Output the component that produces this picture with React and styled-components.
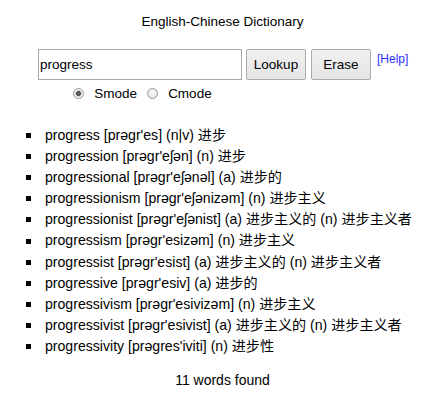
import React, { useState } from 'react';
import styled, { createGlobalStyle } from 'styled-components';

const GlobalStyle = createGlobalStyle`
    body {
        margin: 0;
        background: #fff;
        color: #000;
        font-family: "Liberation Sans", "Noto Sans CJK SC", sans-serif;
        font-size: 14px;
    }
`;

const Page = styled.div`
    box-sizing: border-box;
    width: 441px;
    padding: 14px 0 0 4px;
`;

const Title = styled.div`
    text-align: center;
    font-size: 13.5px;
    line-height: 16px;
`;

const SearchTable = styled.div`
    display: grid;
    grid-template-columns: 204px auto auto auto;
    justify-content: start;
    align-items: start;
    margin: 19px 0 0 34px;
`;

const Input = styled.input`
    box-sizing: border-box;
    width: 204px;
    height: 31px;
    border: 1px solid #a9a9a9;
    padding: 0 1px;
    font-family: inherit;
    font-size: 13.5px;
    color: #000;
    outline: none;
`;

const Button = styled.button`
    box-sizing: border-box;
    height: 31px;
    width: 60px;
    margin-left: ${p => p.$gap}px;
    border: 1px solid #acacac;
    border-radius: 2px;
    background: linear-gradient(#f0f0f0, #e5e5e5);
    font-family: inherit;
    font-size: 13.5px;
    color: #000;
    padding: 0;
`;

const Help = styled.a`
    color: #3030ff;
    font-size: 12px;
    line-height: 14px;
    text-decoration: none;
    margin-left: 6px;
    padding-top: 3px;
`;

const Modes = styled.div`
    grid-column: 1;
    display: flex;
    justify-content: center;
    align-items: center;
    gap: 10px;
    height: 26px;
    padding-left: 5px;
    font-size: 13.5px;
`;

const Mode = styled.label`
    display: flex;
    align-items: center;
    gap: 10px;
`;

const Radio = styled.input`
    appearance: none;
    box-sizing: border-box;
    width: 11px;
    height: 11px;
    margin: 0;
    border: 1px solid #9a9a9a;
    border-radius: 50%;
    background: radial-gradient(circle at 50% 40%, #fafafa, #dcdcdc);

    &:checked {
        background: radial-gradient(circle, #5a5a5a 0 2.3px, #d8d8d8 2.8px 3.4px, #f0f0f0 3.6px);
    }
`;

const List = styled.ul`
    list-style: none;
    margin: 19px 0 0;
    padding: 0 0 0 22px;
    line-height: 21.1px;
    font-size: 14.1px;
`;

const Item = styled.li`
    display: flex;
    align-items: center;
    gap: 14px;
    white-space: nowrap;
`;

const Bullet = styled.span`
    width: 5px;
    height: 5px;
    background: #000;
    flex: none;
`;

const Footer = styled.div`
    text-align: center;
    line-height: 16px;
    margin-top: 15px;
`;

const words = [
    ["progress", "prəgr'es", "(n|v) 进步"],
    ["progression", "prəgr'eʃən", "(n) 进步"],
    ["progressional", "prəgr'eʃənəl", "(a) 进步的"],
    ["progressionism", "prəgr'eʃənizəm", "(n) 进步主义"],
    ["progressionist", "prəgr'eʃənist", "(a) 进步主义的 (n) 进步主义者"],
    ["progressism", "prəgr'esizəm", "(n) 进步主义"],
    ["progressist", "prəgr'esist", "(a) 进步主义的 (n) 进步主义者"],
    ["progressive", "prəgr'esiv", "(a) 进步的"],
    ["progressivism", "prəgr'esivizəm", "(n) 进步主义"],
    ["progressivist", "prəgr'esivist", "(a) 进步主义的 (n) 进步主义者"],
    ["progressivity", "prəgres'iviti", "(n) 进步性"],
];

export default function App() {
    const [mode, setMode] = useState('s');
    return (
        <Page>
            <GlobalStyle />
            <Title>English-Chinese Dictionary</Title>
            <SearchTable>
                <Input defaultValue="progress" />
                <Button $gap={4}>Lookup</Button>
                <Button $gap={5}>Erase</Button>
                <Help href="#">[Help]</Help>
                <Modes>
                    <Mode>
                        <Radio type="radio" name="mode" checked={mode === 's'} onChange={() => setMode('s')} />
                        Smode
                    </Mode>
                    <Mode>
                        <Radio type="radio" name="mode" checked={mode === 'c'} onChange={() => setMode('c')} />
                        Cmode
                    </Mode>
                </Modes>
            </SearchTable>
            <List>
                {words.map((w, i) => (
                    <Item key={i}>
                        <Bullet />
                        <span>{w[0]} [{w[1]}] {w[2]}</span>
                    </Item>
                ))}
            </List>
            <Footer>11 words found</Footer>
        </Page>
    );
}
